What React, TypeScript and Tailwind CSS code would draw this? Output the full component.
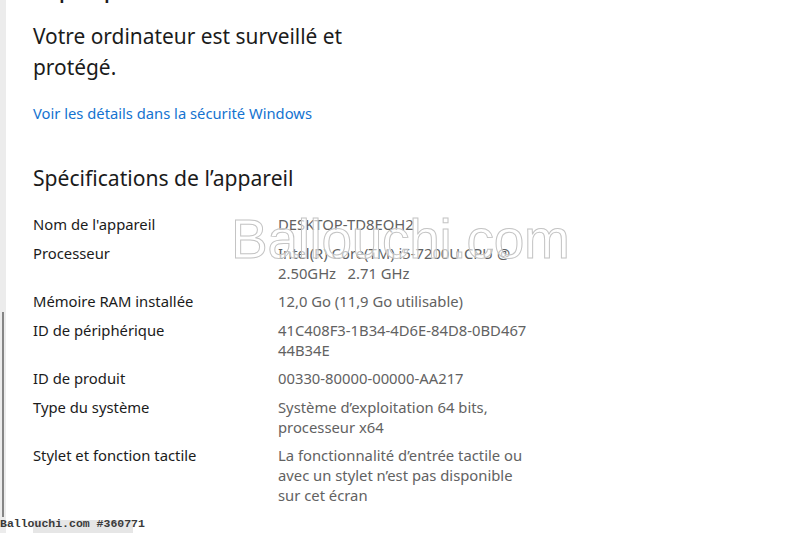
const specs: { label: string; value: string[] }[] = [
  { label: "Nom de l'appareil", value: ["DESKTOP-TD8EQH2"] },
  { label: "Processeur", value: ["Intel(R) Core(TM) i5-7200U CPU @", "2.50GHz   2.71 GHz"] },
  { label: "Mémoire RAM installée", value: ["12,0 Go (11,9 Go utilisable)"] },
  { label: "ID de périphérique", value: ["41C408F3-1B34-4D6E-84D8-0BD467", "44B34E"] },
  { label: "ID de produit", value: ["00330-80000-00000-AA217"] },
  { label: "Type du système", value: ["Système d’exploitation 64 bits,", "processeur x64"] },
  {
    label: "Stylet et fonction tactile",
    value: ["La fonctionnalité d’entrée tactile ou", "avec un stylet n’est pas disponible", "sur cet écran"],
  },
];

export default function App() {
  return (
    <div className="relative w-[800px] h-[533px] overflow-hidden bg-white flex font-['Noto_Sans','Open_Sans',sans-serif]">
      {/* scroll strip */}
      <div className="w-[6px] h-full bg-[#ececec] flex flex-col shrink-0">
        <div className="h-[312px]" />
        <div className="ml-[2px] w-[2px] h-[205px] bg-[#858585]" />
      </div>

      {/* content */}
      <div className="flex flex-col pl-[27px]">
        <h1 className="mt-[-33px] h-[36px] text-[28px] leading-[36px] text-[#1b1b1b]">À propos</h1>

        <p className="mt-[18px] w-[345px] text-[20.9px] leading-[31px] text-[#1b1b1b]">
          Votre ordinateur est surveillé et protégé.
        </p>

        <a className="mt-[20px] text-[14.75px] leading-5 text-[#1473d0]">Voir les détails dans la sécurité Windows</a>

        <h2 className="mt-[40px] text-[21.1px] leading-[30px] text-[#1b1b1b]">Spécifications de l’appareil</h2>

        <div className="mt-[21px] flex flex-col">
          {specs.map((s) => (
            <div key={s.label} className="flex pb-[8.5px] text-[14.8px] leading-[20px]">
              <div className="w-[245px] shrink-0 text-[#1b1b1b]">{s.label}</div>
              <div className="text-[#626262] whitespace-pre">
                {s.value.map((l) => (
                  <div key={l}>{l}</div>
                ))}
              </div>
            </div>
          ))}
        </div>

        <div className="mt-[6px] w-[100px] h-[30px] bg-[#e6e6e6]" />
      </div>

      {/* watermark */}
      <div className="absolute left-[231px] top-[206px] text-[55px] leading-[66px] font-['Liberation_Sans',sans-serif] text-[rgba(255,255,255,0.6)] [-webkit-text-stroke:1px_#c4c4c4] tracking-[-0.3px]">
        Ballouchi.com
      </div>
      <div className="absolute left-0 top-[517px] text-[11.5px] leading-[14px] font-bold font-['Liberation_Mono',monospace] text-[#3a3a3a]">
        Ballouchi.com #360771
      </div>
    </div>
  );
}
